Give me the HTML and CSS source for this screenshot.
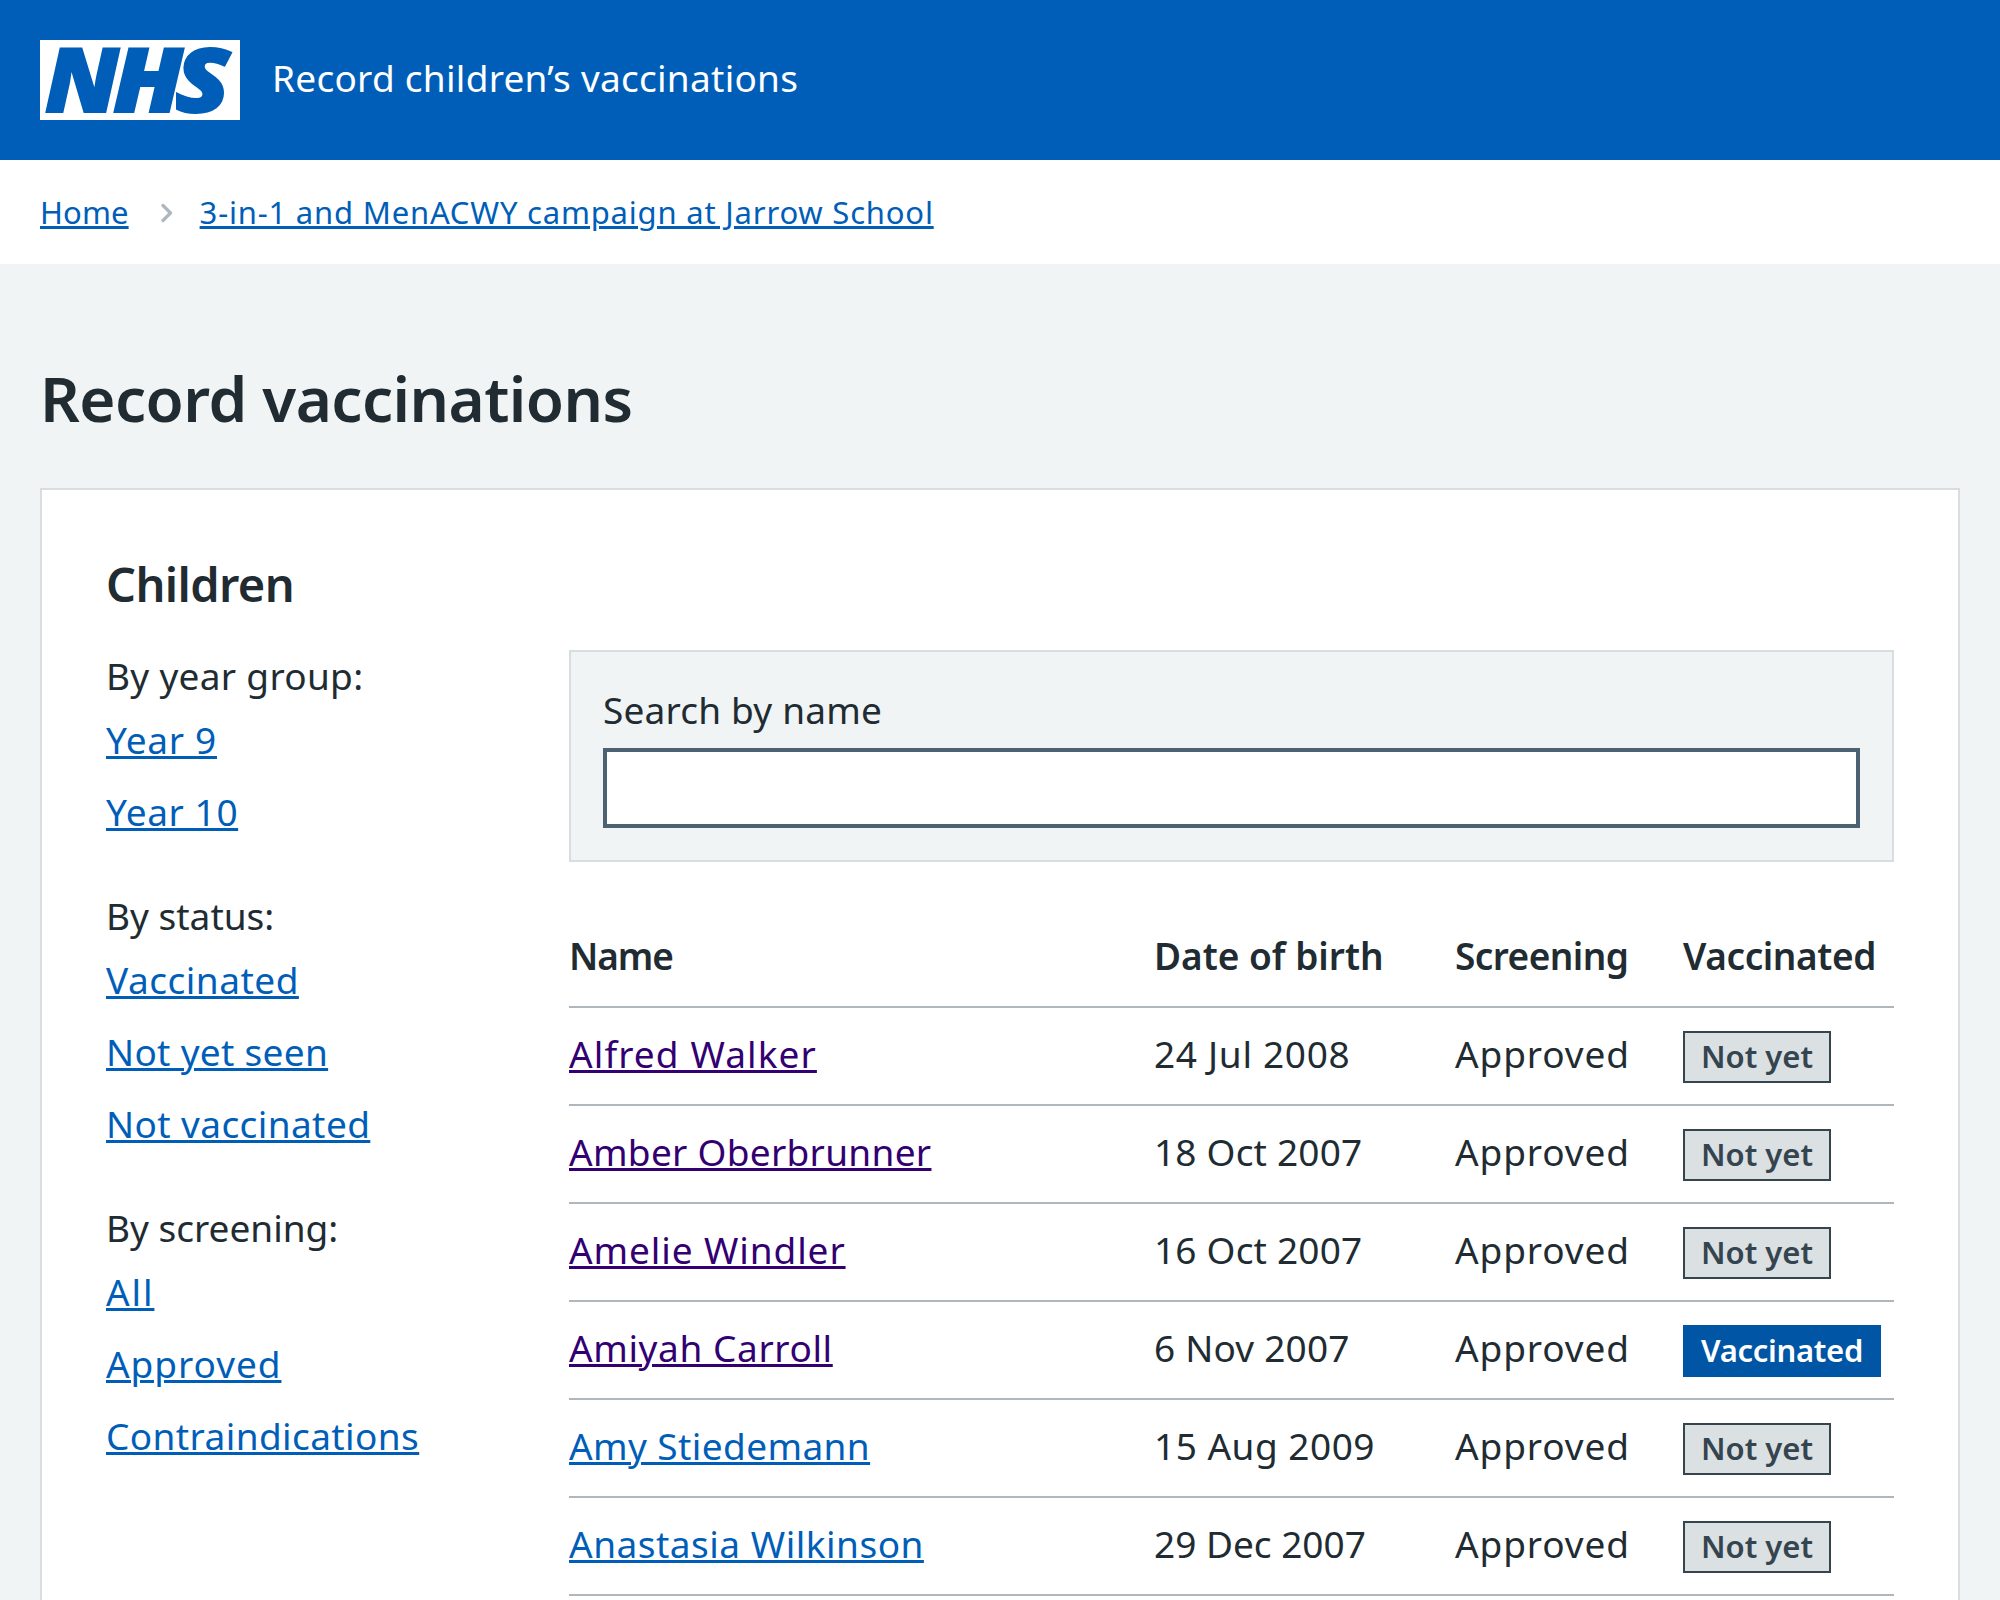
FILE: index.html
```html
<!DOCTYPE html>
<html lang="en">
<head>
<meta charset="utf-8">
<title>Record vaccinations</title>
<link rel="stylesheet" href="styles.css">
</head>
<body>
<header class="header">
  <svg class="logo" viewBox="0 0 200 80" role="img" aria-label="NHS">
    <rect width="200" height="80" fill="#fff"/>
    <text class="logo-text" x="5" y="72" textLength="74" lengthAdjust="spacingAndGlyphs">N</text>
    <text class="logo-text" x="73" y="72" textLength="70" lengthAdjust="spacingAndGlyphs">H</text>
    <text class="logo-text" x="135" y="72" textLength="55" lengthAdjust="spacingAndGlyphs">S</text>
  </svg>
  <span class="service">Record children’s vaccinations</span>
</header>
<nav class="breadcrumb">
  <a class="track-1" href="#">Home</a>
  <svg class="chevron" viewBox="0 0 12 20"><path d="M2 2.5 9.5 10 2 17.5" fill="none" stroke="#aeb7bd" stroke-width="3.2" stroke-linecap="round" stroke-linejoin="round"/></svg>
  <a class="track-8" href="#">3-in-1 and MenACWY campaign at Jarrow School</a>
</nav>
<main class="main">
  <h1>Record vaccinations</h1>
  <section class="card">
    <h2>Children</h2>
    <div class="columns">
      <aside class="filters">
        <p class="track-3">By year group:</p>
        <ul><li><a class="track-7" href="#">Year 9</a></li><li><a class="track-6" href="#">Year 10</a></li></ul>
        <p>By status:</p>
        <ul><li><a class="track-5" href="#">Vaccinated</a></li><li><a class="track-3" href="#">Not yet seen</a></li><li><a class="track-4" href="#">Not vaccinated</a></li></ul>
        <p>By screening:</p>
        <ul><li><a class="track-19" href="#">All</a></li><li><a class="track-10" href="#">Approved</a></li><li><a class="track-4" href="#">Contraindications</a></li></ul>
      </aside>
      <div class="results">
        <div class="search">
          <label class="track-2" for="search">Search by name</label>
          <input id="search" type="text">
        </div>
        <table class="table">
          <colgroup><col class="col-name"><col class="col-dob"><col class="col-screening"><col></colgroup>
          <thead><tr><th class="tight-11">Name</th><th>Date of birth</th><th class="tight-5">Screening</th><th class="tight-4">Vaccinated</th></tr></thead>
          <tbody>
            <tr><td><a class="visited track-11" href="#">Alfred Walker</a></td><td class="track-7">24 Jul 2008</td><td class="track-9">Approved</td><td><span class="tag">Not yet</span></td></tr>
            <tr><td><a class="visited track-3" href="#">Amber Oberbrunner</a></td><td class="track-2">18 Oct 2007</td><td class="track-9">Approved</td><td><span class="tag">Not yet</span></td></tr>
            <tr><td><a class="visited track-9" href="#">Amelie Windler</a></td><td class="track-2">16 Oct 2007</td><td class="track-9">Approved</td><td><span class="tag">Not yet</span></td></tr>
            <tr><td><a class="visited track-6" href="#">Amiyah Carroll</a></td><td class="track-2">6 Nov 2007</td><td class="track-9">Approved</td><td><span class="tag tag-done">Vaccinated</span></td></tr>
            <tr><td><a class="track-4" href="#">Amy Stiedemann</a></td><td class="track-5">15 Aug 2009</td><td class="track-9">Approved</td><td><span class="tag">Not yet</span></td></tr>
            <tr><td><a class="track-5" href="#">Anastasia Wilkinson</a></td><td>29 Dec 2007</td><td class="track-9">Approved</td><td><span class="tag">Not yet</span></td></tr>
          </tbody>
        </table>
      </div>
    </div>
  </section>
</main>
</body>
</html>
```
FILE: styles.css
```css
* { box-sizing: border-box; }
body {
  margin: 0;
  height: 1600px;
  overflow: hidden;
  background: #f0f4f5;
  color: #212b32;
  font: 37px/56px "Noto Sans", "Open Sans", sans-serif;
}
a {
  color: #005eb8;
  text-decoration: underline;
  text-decoration-thickness: 3px;
  text-underline-offset: 2px;
}
a.visited { color: #330072; }
.header {
  display: flex;
  align-items: center;
  height: 160px;
  padding: 0 40px;
  gap: 32px;
  background: #005eb8;
  color: #fff;
}
.logo { width: 200px; height: 80px; overflow: visible; }
.logo-text {
  fill: #005eb8;
  stroke: #005eb8;
  stroke-width: 2;
  font: italic 800 89px "Open Sans", "Noto Sans", sans-serif;
}
.service { padding-bottom: 4px; letter-spacing: 0.27px; }
.breadcrumb {
  display: flex;
  align-items: center;
  height: 104px;
  padding: 0 40px;
  background: #fff;
  font-size: 31px;
}
.chevron { width: 12px; height: 20px; margin: 2px 27px 0 32px; }
.main { padding: 98px 40px 0; }
h1 { margin: 0 0 54px; font-size: 62px; line-height: 72px; font-weight: 600; letter-spacing: -0.55px; }
.card { padding: 64px; border: 2px solid #d8dde0; background: #fff; }
h2 { margin: 0 0 34px; font-size: 47px; line-height: 60px; font-weight: 600; letter-spacing: -0.6px; }
.columns { display: grid; grid-template-columns: 463px 1fr; }
.filters p { margin: 0 0 8px; }
.filters ul { margin: 0 0 48px; padding: 0; list-style: none; }
.filters li + li { margin-top: 16px; }
.results { padding-top: 2px; }
.search { padding: 30px 32px 32px; border: 2px solid #d8dde0; background: #f0f4f5; }
.search label { display: block; margin-bottom: 10px; }
.search input { display: block; width: 100%; height: 80px; border: 4px solid #4c6272; border-radius: 0; background: #fff; }
.table { width: 100%; margin-top: 48px; border-spacing: 0; table-layout: fixed; }
.col-name { width: 585px; }
.col-dob { width: 301px; }
.col-screening { width: 228px; }
.table th, .table td { padding: 18px 0 22px; border-bottom: 2px solid #aeb7bd; text-align: left; vertical-align: top; }
.table th { font-weight: 600; }
.tag {
  display: inline-block;
  margin: -2px 0;
  padding: 0 16px 2px;
  border: 2px solid #354550;
  background: #dbe0e3;
  color: #354550;
  font-size: 31px;
  line-height: 46px;
  font-weight: 600;
}
.tag-done { border-color: #0055a5; background: #0055a5; color: #fff; letter-spacing: -0.3px; }

/* Letter spacing, in tenths of a pixel */
.track-1 { letter-spacing: 0.1px; }
.track-2 { letter-spacing: 0.2px; }
.track-3 { letter-spacing: 0.3px; }
.track-4 { letter-spacing: 0.4px; }
.track-5 { letter-spacing: 0.5px; }
.track-6 { letter-spacing: 0.6px; }
.track-7 { letter-spacing: 0.7px; }
.track-8 { letter-spacing: 0.8px; }
.track-9 { letter-spacing: 0.9px; }
.track-10 { letter-spacing: 0.96px; }
.track-11 { letter-spacing: 1.1px; }
.track-19 { letter-spacing: 1.9px; }
.tight-4 { letter-spacing: -0.4px; }
.tight-5 { letter-spacing: -0.55px; }
.tight-11 { letter-spacing: -1.1px; }
```
